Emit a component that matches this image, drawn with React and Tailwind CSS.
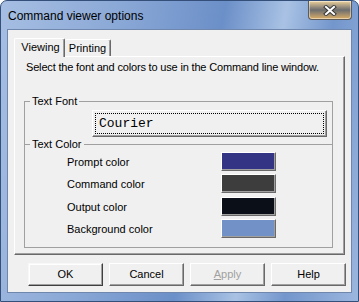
import React from 'react';

const SWATCHES = [
  { label: 'Prompt color', color: '#343484' },
  { label: 'Command color', color: '#3d3d3d' },
  { label: 'Output color', color: '#0b0f17' },
  { label: 'Background color', color: '#7292c7' },
];

function DlgButton({ children, isDefault, disabled }) {
  return (
    <button
      className={
        'w-[75px] h-[23px] bg-[#f0f0f0] text-[11px] leading-none border ' +
        (isDefault
          ? 'border-t-[#f8f8f8] border-l-[#f8f8f8] border-r-[#404040] border-b-[#404040] shadow-[inset_-1px_-1px_0_#a0a0a0,inset_1px_1px_0_#ffffff]'
          : 'border-t-white border-l-white border-r-[#696969] border-b-[#696969] shadow-[inset_-1px_-1px_0_#a0a0a0]') +
        (disabled ? ' text-[#a0a0a0]' : ' text-black')
      }
    >
      {children}
    </button>
  );
}

function CloseButton() {
  return (
    <div className="ml-auto mr-[6px] w-[44px] h-[19px] rounded-b-[4px] border border-t-0 border-[#5b5b5b] bg-gradient-to-b from-[#eed29a] via-[#6d6d6d] to-[#dcae62] shadow-[inset_0_0_0_1px_rgba(255,255,255,0.45)] flex items-center justify-center">
      <svg width="14" height="11" viewBox="0 0 14 11">
        <path d="M3 2 L11 9 M11 2 L3 9" stroke="#3a3a3a" strokeWidth="4" strokeLinecap="square" />
        <path d="M3 2 L11 9 M11 2 L3 9" stroke="#ffffff" strokeWidth="2" strokeLinecap="square" />
      </svg>
    </div>
  );
}

export default function App() {
  return (
    <div className="w-[359px] h-[302px] flex flex-col rounded-t-[7px] border border-[#34507a] bg-[linear-gradient(100deg,#a6bee2_0%,#8aa8d6_30%,#6b8fc8_55%,#a9c2e4_70%,#7396cc_82%,#9cb6de_100%)] font-['Liberation_Sans',Arial,sans-serif] overflow-hidden">
      {/* Title bar */}
      <div className="h-[28px] flex items-start shrink-0">
        <div className="pl-[7px] pt-[8px] text-[12px] leading-[14px] text-black">Command viewer options</div>
        <CloseButton />
      </div>

      {/* Client area */}
      <div className="flex-1 mx-[6px] mb-[8px] border border-[#6f87ad] bg-[#f0f0f0] flex flex-col">
        {/* Tabs */}
        <div className="mt-[8px] ml-[6px] h-[18px] flex items-end text-[11px] leading-[13px]">
          <div className="relative z-10 w-[51px] h-[19px] -mb-px bg-[#f0f0f0] border-l border-t border-r border-l-white border-t-white border-r-[#696969] rounded-t-[2px] shadow-[inset_-1px_0_0_#a0a0a0] flex items-start justify-center pt-[2px] pl-[2px]">
            Viewing
          </div>
          <div className="w-[46px] h-[17px] bg-[#f0f0f0] border-t border-r border-t-white border-r-[#696969] rounded-t-[2px] shadow-[inset_-1px_0_0_#a0a0a0] flex items-start justify-center pt-[2px]">
            Printing
          </div>
        </div>

        {/* Tab panel */}
        <div className="mx-[6px] h-[199px] border border-t-white border-l-white border-r-[#696969] border-b-[#696969] shadow-[inset_-1px_-1px_0_#a0a0a0] pl-[9px] pr-[11px] pt-[4px] text-[11px] leading-[13px] text-black">
          <div className="ml-[2px] tracking-[-0.17px]">Select the font and colors to use in the Command line window.</div>

          <fieldset className="mt-[21px] border border-b-0 border-[#a0a0a0] pb-[7px]">
            <legend className="ml-[5px] px-[2px] leading-[13px]">Text Font</legend>
            <div className="mt-[2px] ml-[67px] mr-[5px] h-[27px] border border-t-white border-l-white border-r-[#696969] border-b-[#696969] shadow-[inset_-1px_-1px_0_#a0a0a0] p-[2px]">
              <div className="h-full border border-dotted border-black flex items-center pl-[3px] font-['Liberation_Mono','Courier_New',monospace] text-[13px]">
                Courier
              </div>
            </div>
          </fieldset>

          <fieldset className="-mt-[6px] border border-[#a0a0a0] pb-[9px]">
            <legend className="ml-[5px] px-[2px] leading-[13px]">Text Color</legend>
            <div className="flex flex-col pt-[1px]">
              {SWATCHES.map((s, i) => (
                <div key={s.label} className={'flex items-center pl-[42px] ' + (i === 2 ? 'mt-[4px]' : i > 0 ? 'mt-[3px]' : '')}>
                  <div className="w-[154px] pt-[1px]">{s.label}</div>
                  <div
                    className="w-[55px] h-[19px] border border-t-white border-l-white border-r-[#696969] border-b-[#696969] shadow-[inset_-1px_-1px_0_#a0a0a0]"
                    style={{ backgroundColor: s.color }}
                  />
                </div>
              ))}
            </div>
          </fieldset>
        </div>

        {/* Buttons */}
        <div className="mt-[8px] pr-[5px] flex justify-end gap-[6px]">
          <DlgButton isDefault>OK</DlgButton>
          <DlgButton>Cancel</DlgButton>
          <DlgButton disabled>
            <span className="underline">A</span>pply
          </DlgButton>
          <DlgButton>Help</DlgButton>
        </div>
      </div>
    </div>
  );
}
